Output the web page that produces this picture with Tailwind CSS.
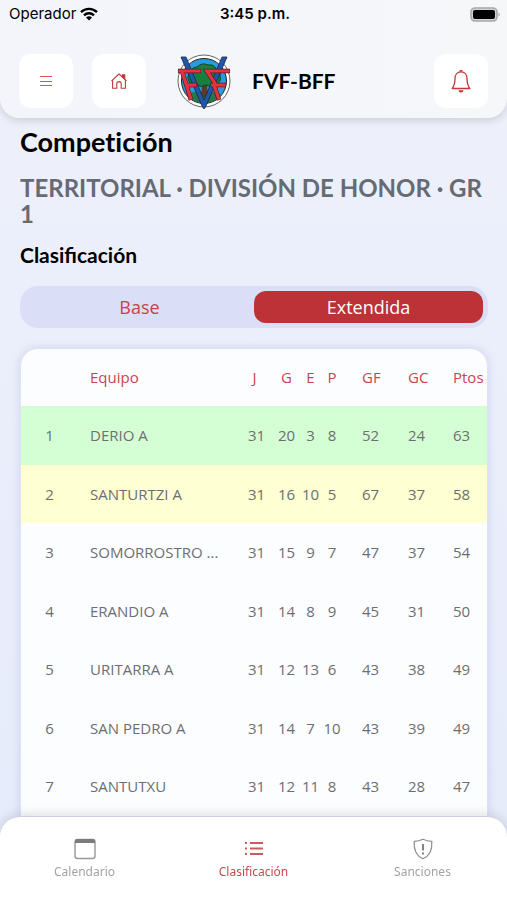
<!DOCTYPE html>
<html lang="es">
<head>
  <meta charset="UTF-8" />
  <meta name="viewport" content="width=device-width, initial-scale=1.0" />
  <title>FVF-BFF - Clasificación</title>
  <script src="https://cdn.jsdelivr.net/npm/@tailwindcss/browser@4"></script>
</head>
<body class="h-screen overflow-hidden flex flex-col bg-linear-to-b from-[#eef1fb] to-[#e6ebfb] font-['Open_Sans',sans-serif] text-black">

  <!-- Header -->
  <header class="relative z-10 shrink-0 rounded-b-[20px] bg-linear-to-r from-[#f3f5fb] to-[#f6f7f9] shadow-[0_2px_10px_rgba(0,0,0,0.16)] pb-[9px]">
    <div class="grid grid-cols-3 items-center h-7 pl-[9px] pr-[6px] font-['Inter',sans-serif] text-[15px]">
      <div class="flex items-center gap-1">
        <span>Operador</span>
        <svg class="w-[18px] h-[14px]" viewBox="0 0 18 14" aria-hidden="true">
          <g fill="none" stroke="#000" stroke-width="2.4">
            <path d="M1 5.2a11.4 11.4 0 0 1 16 0" />
            <path d="M4 8.3a7.2 7.2 0 0 1 10 0" />
          </g>
          <path d="M9 13.6 6 10.6a4.3 4.3 0 0 1 6 0z" />
        </svg>
      </div>
      <span class="text-center font-semibold">3:45 p.m.</span>
      <svg class="justify-self-end w-[31px] h-[15px]" viewBox="0 0 31 15" aria-hidden="true">
        <rect x="1" y="1" width="26" height="13" rx="4" fill="#d4d4d4" stroke="#a8a8a8" stroke-width="1.6" />
        <rect x="3" y="3" width="22" height="9" rx="2" />
        <path d="M28.5 5.5a2.2 2.2 0 0 1 0 4z" fill="#a8a8a8" />
      </svg>
    </div>
    <div class="flex items-center px-[19px] pt-[25px]">
      <button type="button" aria-label="Menú" class="grid place-items-center w-[54px] h-[54px] rounded-xl bg-white">
        <svg class="w-3 h-3" viewBox="0 0 12 12" fill="none" stroke="#d0585c"><path d="M0 1.5h12M0 6.5h12M0 10.5h12" /></svg>
      </button>
      <button type="button" aria-label="Inicio" class="ml-[19px] grid place-items-center w-[54px] h-[54px] rounded-xl bg-white">
        <svg class="w-4 h-4" viewBox="0 0 16 16" fill="none" stroke="#c03a3e" stroke-width="1.1" stroke-linejoin="round" stroke-linecap="round">
          <path d="M.8 7.6 8 1l7.2 6.6M1.6 7v8.2h4.2v-4.4a2.2 2.2 0 0 1 4.4 0v4.4h4.2V7" />
          <path d="M11.4 1.8h2.4v4.4l-2.4-2.2z" fill="#c03a3e" />
        </svg>
      </button>
      <svg class="ml-[30px] w-[56px] h-[56px]" viewBox="0 0 56 56" role="img" aria-label="Escudo FVF-BFF">
        <circle cx="28" cy="28" r="26" fill="#fff" stroke="#666" stroke-width="1" />
        <circle cx="28" cy="28" r="22.500" fill="#2b9be0" stroke="#222" stroke-width="1" />
        <path d="M11 42q5-4 13-3l5-1 5 1q8-1 11 3-6 8-17 8t-17-8z" fill="#237a46" />
        <path d="M26 32h5l1 12h-7z" fill="#5d3a22" />
        <path d="M13 28q-3-5 2-8 0-6 6-6 5-5 11-2 6-1 8 4 5 2 4 7 2 6-4 8-5 4-10 1-5 3-9 0-6 1-8-4z" fill="#17803f" stroke="#123f25" stroke-width="1" />
        <path d="M5 4h5l18 43L46 4h5L30 53l-2 3-2-3z" fill="#1f58a8" stroke="#16254a" stroke-width=".8" />
        <g fill="none">
          <path d="M2 18h23M6 18l9 29M10 32h11M54 18H31l9 14M50 32H35M38 32l5 15" stroke="#5a1a28" stroke-width="4.600" />
          <path d="M2.500 18h22M6 18l9 28.500M10 32h10.500M53.500 18H31l9 14M49.500 32H35M38 32l5 14.500" stroke="#e2343f" stroke-width="3.200" />
        </g>
      </svg>
      <span class="ml-[20px] font-['Lato',sans-serif] font-bold text-[21px]">FVF-BFF</span>
      <button type="button" aria-label="Notificaciones" class="ml-auto grid place-items-center w-[54px] h-[54px] rounded-xl bg-white">
        <svg class="w-5 h-[23px]" viewBox="0 0 20 23" fill="none" stroke="#c03a3e" stroke-width="1.3" stroke-linejoin="round">
          <path d="M10 1.8C6 1.8 4 5 4 8.5c0 5-.8 7.500-2.800 10h17.600c-2-2.500-2.800-5-2.800-10 0-3.500-2-6.700-6-6.700z" />
          <path d="M9 1.500a1 1 0 0 1 2 0" />
          <path d="M7.500 20.200h5a2.500 2.300 0 0 1-5 0z" fill="#c03a3e" stroke="none" />
        </svg>
      </button>
    </div>
  </header>

  <main class="flex-1 min-h-0 px-5 pt-2">
    <h1 class="font-['Lato',sans-serif] font-bold text-[27px] leading-8 [font-variant-ligatures:none]">Competición</h1>
    <h2 class="mt-[17px] font-['Lato',sans-serif] font-bold text-2xl leading-[26px] text-[#666a72]">TERRITORIAL · DIVISIÓN DE HONOR · GR 1</h2>
    <h3 class="mt-[14px] font-['Lato',sans-serif] font-bold text-[21px] leading-7">Clasificación</h3>

    <div class="mt-[17px] -mr-px flex h-[42px] rounded-[18px] bg-[#dadff7] p-[5px] text-lg">
      <button type="button" class="flex-1 text-[#c8424a]">Base</button>
      <button type="button" class="flex-1 rounded-xl bg-[#bc3236] text-white">Extendida</button>
    </div>

    <div class="mt-5 -mr-px overflow-hidden rounded-t-[18px] border border-[#dfe3f7] bg-[#fcfdff] shadow-[0_0_8px_rgba(120,130,200,0.25)]">
      <table class="w-full table-fixed text-[15px] text-[#6d6e72]">
        <colgroup>
          <col class="w-[57px]" />
          <col />
          <col class="w-[31px]" />
          <col class="w-[29px]" />
          <col class="w-[19px]" />
          <col class="w-6" />
          <col class="w-[46px]" />
          <col class="w-[45px]" />
          <col class="w-[52px]" />
        </colgroup>
        <thead class="text-[#cb4450]">
          <tr class="h-[57px]">
            <th></th>
            <th class="pl-3 text-left font-normal">Equipo</th>
            <th class="pr-1 font-normal">J</th>
            <th class="font-normal">G</th>
            <th class="font-normal">E</th>
            <th class="font-normal">P</th>
            <th class="pl-[18px] text-left font-normal">GF</th>
            <th class="pl-[18px] text-left font-normal">GC</th>
            <th class="pl-[18px] text-left font-normal">Ptos</th>
          </tr>
        </thead>
        <tbody id="standings"></tbody>
      </table>
    </div>
  </main>

  <!-- Bottom navigation -->
  <nav class="fixed z-10 inset-x-0 bottom-0 grid grid-cols-3 h-[83px] pt-[21px] rounded-t-[20px] bg-white font-['Noto_Sans',sans-serif] text-xs text-[#a3a3a3] shadow-[0_-2px_12px_rgba(0,0,0,0.14)]">
    <a href="#calendario" class="flex flex-col items-center gap-1">
      <svg class="w-6 h-[22px]" viewBox="0 0 24 22"><rect x="2" y="1.500" width="20" height="19" rx="2.500" fill="none" stroke="#989898" stroke-width="1.400" /><path d="M2 5V3q0-2 2-2h16q2 0 2 2v2z" fill="#7c7c7c" /></svg>
      Calendario
    </a>
    <a href="#clasificacion" class="flex flex-col items-center gap-1 text-[#c9484c]">
      <svg class="w-6 h-[22px]" viewBox="0 0 24 22" stroke="#cf5a5e" stroke-width="2"><path d="M3 5h2M3 10.500h2M3 16h2M8 5h13M8 10.500h13M8 16h13" /></svg>
      Clasificación
    </a>
    <a href="#sanciones" class="flex flex-col items-center gap-1">
      <svg class="w-6 h-[22px]" viewBox="0 0 24 22" fill="none" stroke="#8e8e8e" stroke-width="1.200"><path d="M12 1.200c-3 1.400-6 2-8.800 2.200-.5 8 1.800 14.500 8.800 17.400 7-2.900 9.300-9.400 8.800-17.400C18 3.200 15 2.600 12 1.200z" /><path d="M12 6v6.500M12 14.500v2" stroke="#777" stroke-width="1.800" /></svg>
      Sanciones
    </a>
  </nav>

  <script>
    const teams = [
      { name: "DERIO A", stats: [31, 20, 3, 8, 52, 24, 63] },
      { name: "SANTURTZI A", stats: [31, 16, 10, 5, 67, 37, 58] },
      { name: "SOMORROSTRO ...", stats: [31, 15, 9, 7, 47, 37, 54] },
      { name: "ERANDIO A", stats: [31, 14, 8, 9, 45, 31, 50] },
      { name: "URITARRA A", stats: [31, 12, 13, 6, 43, 38, 49] },
      { name: "SAN PEDRO A", stats: [31, 14, 7, 10, 43, 39, 49] },
      { name: "SANTUTXU", stats: [31, 12, 11, 8, 43, 28, 47] }
    ];
    const rowColors = ["bg-[#d4ffd4]", "bg-[#feffd2]"];

    document.getElementById("standings").innerHTML = teams.map((team, index) => `
      <tr class="h-[59px] even:h-[58px] ${rowColors[index] || ""}">
        <td class="text-center">${index + 1}</td>
        <td class="pl-3 whitespace-nowrap">${team.name}</td>
        ${team.stats.map((value, i) => `<td class="${i < 4 ? "text-center" : "pl-[18px]"}">${value}</td>`).join("")}
      </tr>
    `).join("");
  </script>
</body>
</html>
